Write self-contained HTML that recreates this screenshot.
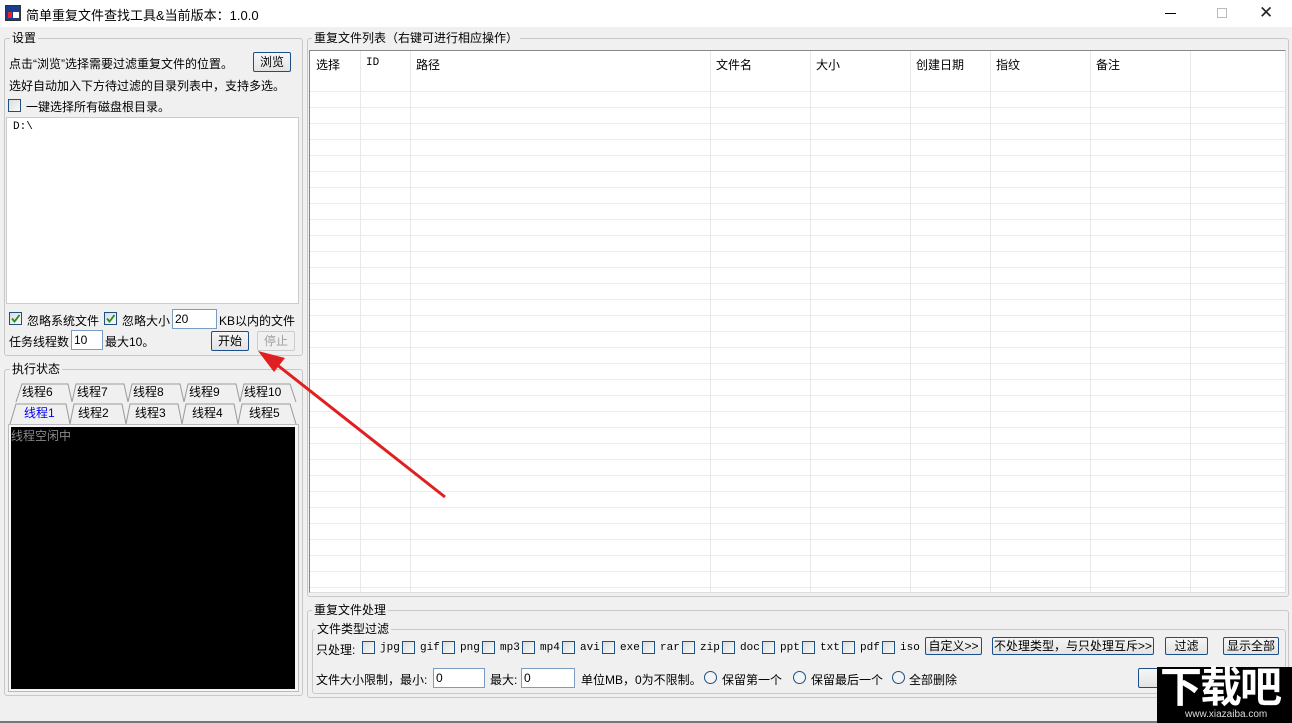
<!DOCTYPE html>
<html><head><meta charset="utf-8">
<style>
*{margin:0;padding:0;box-sizing:border-box}
body{width:1292px;height:723px;background:#f0f0f0;font-family:"Liberation Sans","Noto Sans CJK SC","WenQuanYi Zen Hei",sans-serif;font-size:12px;color:#000;position:relative;overflow:hidden}
.a{position:absolute;white-space:nowrap}
.gb{position:absolute;border:1px solid #c8c8c8;border-radius:3px}
.lg{position:absolute;background:#f0f0f0;padding:0 2px;font-size:12px;line-height:14px}
.btn{position:absolute;border:1px solid #1c4f8a;border-radius:2px;background:linear-gradient(#f6f6f6,#e3e3e3);text-align:center;line-height:16px;font-size:12px}
.cb{position:absolute;width:13px;height:13px;border:1px solid #1c5180;background:linear-gradient(135deg,#dcdcdc,#fafafa)}
.tb{position:absolute;background:#fff;border:1px solid #7a9cc0;height:20px;font-size:12px;line-height:18px;padding-left:2px}
.rd{position:absolute;width:13px;height:13px;border:1px solid #1c5180;border-radius:50%;background:#f4f4f4}
.mono{font-family:"Liberation Mono","Noto Sans CJK SC",monospace;font-size:11px}
.tab{position:absolute;height:20px;font-size:12px;line-height:20px;text-align:center}
</style></head><body>
<!-- title bar -->
<div class="a" style="left:0;top:0;width:1292px;height:27px;background:#fff"></div>
<div class="a" style="left:5px;top:5px;width:16px;height:16px;background:#1a3c8c;border:1px solid #333"><div style="position:absolute;left:2px;top:6px;width:4px;height:6px;background:#e22"></div><div style="position:absolute;left:7px;top:6px;width:6px;height:6px;background:#fff"></div></div>
<div class="a" style="left:26px;top:5px;font-size:13px">简单重复文件查找工具&amp;当前版本：1.0.0</div>
<div class="a" style="left:1165px;top:13px;width:11px;height:1px;background:#000"></div>
<div class="a" style="left:1217px;top:8px;width:10px;height:10px;border:1px solid #bbb"></div>
<div class="a" style="left:1259px;top:3px;font-size:17px;color:#222">✕</div>

<!-- settings group -->
<div class="gb" style="left:4px;top:38px;width:299px;height:318px"></div>
<div class="lg" style="left:10px;top:31px">设置</div>
<div class="a" style="left:9px;top:55px">点击“浏览”选择需要过滤重复文件的位置。</div>
<div class="btn" style="left:253px;top:52px;width:38px;height:20px;line-height:18px">浏览</div>
<div class="a" style="left:9px;top:77px">选好自动加入下方待过滤的目录列表中，支持多选。</div>
<div class="cb" style="left:8px;top:99px"></div>
<div class="a" style="left:26px;top:98px">一键选择所有磁盘根目录。</div>
<div class="a" style="left:6px;top:117px;width:293px;height:187px;background:#fff;border:1px solid #ccc"></div>
<div class="a mono" style="left:13px;top:121px">D:\</div>
<div class="cb" style="left:9px;top:312px"><svg width="11" height="11" style="position:absolute;left:0;top:0"><path d="M2 5.5 L4.5 8.5 L9.5 2" stroke="#2a8a2a" stroke-width="1.8" fill="none"/></svg></div>
<div class="a" style="left:27px;top:312px">忽略系统文件</div>
<div class="cb" style="left:104px;top:312px"><svg width="11" height="11" style="position:absolute;left:0;top:0"><path d="M2 5.5 L4.5 8.5 L9.5 2" stroke="#2a8a2a" stroke-width="1.8" fill="none"/></svg></div>
<div class="a" style="left:122px;top:312px">忽略大小</div>
<div class="tb" style="left:172px;top:309px;width:45px">20</div>
<div class="a" style="left:219px;top:312px">KB以内的文件</div>
<div class="a" style="left:9px;top:333px">任务线程数</div>
<div class="tb" style="left:71px;top:330px;width:32px">10</div>
<div class="a" style="left:105px;top:333px">最大10。</div>
<div class="btn" style="left:211px;top:331px;width:38px;height:20px;line-height:18px">开始</div>
<div class="a" style="left:257px;top:331px;width:38px;height:20px;border:1px solid #ccc;border-radius:2px;color:#a0a0a0;text-align:center;line-height:18px">停止</div>

<!-- exec group -->
<div class="gb" style="left:4px;top:369px;width:299px;height:327px"></div>
<div class="lg" style="left:10px;top:362px">执行状态</div>
<svg class="a" style="left:6px;top:380px" width="296" height="48">
<g fill="#f0f0f0" stroke="#9a9a9a" stroke-width="1">
<path d="M10 22 L16 4 L62 4 L66 22"/><path d="M66 22 L70 4 L118 4 L122 22"/><path d="M122 22 L126 4 L174 4 L178 22"/><path d="M178 22 L182 4 L230 4 L234 22"/><path d="M234 22 L238 4 L284 4 L290 22"/>
<path d="M4 44 L10 24 L60 24 L64 44"/><path d="M64 44 L68 24 L116 24 L120 44"/><path d="M120 44 L124 24 L172 24 L176 44"/><path d="M176 44 L180 24 L228 24 L232 44"/><path d="M232 44 L236 24 L284 24 L290 44"/>
</g></svg>
<div class="tab" style="left:22px;top:382px">线程6</div>
<div class="tab" style="left:77px;top:382px">线程7</div>
<div class="tab" style="left:133px;top:382px">线程8</div>
<div class="tab" style="left:189px;top:382px">线程9</div>
<div class="tab" style="left:244px;top:382px">线程10</div>
<div class="tab" style="left:24px;top:403px;color:#0000ee">线程1</div>
<div class="tab" style="left:78px;top:403px">线程2</div>
<div class="tab" style="left:135px;top:403px">线程3</div>
<div class="tab" style="left:192px;top:403px">线程4</div>
<div class="tab" style="left:249px;top:403px">线程5</div>
<div class="a" style="left:8px;top:424px;width:291px;height:268px;border:1px solid #bbb;background:#f6f6f6"></div>
<div class="a" style="left:11px;top:427px;width:284px;height:262px;background:#000"></div>
<div class="a" style="left:11px;top:427px;color:#8a8a8a">线程空闲中</div>

<!-- list group -->
<div class="gb" style="left:307px;top:38px;width:982px;height:559px"></div>
<div class="lg" style="left:312px;top:31px">重复文件列表（右键可进行相应操作）</div>
<div class="a" style="left:309px;top:50px;width:977px;height:543px;border:1px solid #888;border-right-color:#ddd;border-bottom-color:#ddd;background:#fff repeating-linear-gradient(#fff 0,#fff 15px,#ececec 15px,#ececec 16px);background-position:0 25px;background-repeat:repeat"></div>
<div class="a" style="left:310px;top:51px;width:975px;height:25px;background:#fff"></div>
<svg class="a" style="left:310px;top:51px" width="976" height="541"><g stroke="#e8e8e8"><path d="M50.5 0V541M100.5 0V541M400.5 0V541M500.5 0V541M600.5 0V541M680.5 0V541M780.5 0V541M880.5 0V541"/></g></svg>
<div class="a" style="left:316px;top:56px">选择</div>
<div class="a mono" style="left:366px;top:57px">ID</div>
<div class="a" style="left:416px;top:56px">路径</div>
<div class="a" style="left:716px;top:56px">文件名</div>
<div class="a" style="left:816px;top:56px">大小</div>
<div class="a" style="left:916px;top:56px">创建日期</div>
<div class="a" style="left:996px;top:56px">指纹</div>
<div class="a" style="left:1096px;top:56px">备注</div>

<!-- bottom group -->
<div class="gb" style="left:307px;top:610px;width:982px;height:88px"></div>
<div class="lg" style="left:312px;top:603px">重复文件处理</div>
<div class="gb" style="left:312px;top:629px;width:974px;height:65px"></div>
<div class="lg" style="left:315px;top:622px">文件类型过滤</div>
<div class="a" style="left:316px;top:641px">只处理:</div>
<div class="cb" style="left:362px;top:641px"></div><div class="a mono" style="left:380px;top:642px">jpg</div>
<div class="cb" style="left:402px;top:641px"></div><div class="a mono" style="left:420px;top:642px">gif</div>
<div class="cb" style="left:442px;top:641px"></div><div class="a mono" style="left:460px;top:642px">png</div>
<div class="cb" style="left:482px;top:641px"></div><div class="a mono" style="left:500px;top:642px">mp3</div>
<div class="cb" style="left:522px;top:641px"></div><div class="a mono" style="left:540px;top:642px">mp4</div>
<div class="cb" style="left:562px;top:641px"></div><div class="a mono" style="left:580px;top:642px">avi</div>
<div class="cb" style="left:602px;top:641px"></div><div class="a mono" style="left:620px;top:642px">exe</div>
<div class="cb" style="left:642px;top:641px"></div><div class="a mono" style="left:660px;top:642px">rar</div>
<div class="cb" style="left:682px;top:641px"></div><div class="a mono" style="left:700px;top:642px">zip</div>
<div class="cb" style="left:722px;top:641px"></div><div class="a mono" style="left:740px;top:642px">doc</div>
<div class="cb" style="left:762px;top:641px"></div><div class="a mono" style="left:780px;top:642px">ppt</div>
<div class="cb" style="left:802px;top:641px"></div><div class="a mono" style="left:820px;top:642px">txt</div>
<div class="cb" style="left:842px;top:641px"></div><div class="a mono" style="left:860px;top:642px">pdf</div>
<div class="cb" style="left:882px;top:641px"></div><div class="a mono" style="left:900px;top:642px">iso</div>
<div class="btn" style="left:925px;top:637px;width:57px;height:18px">自定义&gt;&gt;</div>
<div class="btn" style="left:992px;top:637px;width:162px;height:18px">不处理类型，与只处理互斥&gt;&gt;</div>
<div class="btn" style="left:1165px;top:637px;width:43px;height:18px">过滤</div>
<div class="btn" style="left:1223px;top:637px;width:56px;height:18px">显示全部</div>
<div class="a" style="left:316px;top:671px">文件大小限制，最小:</div>
<div class="tb" style="left:433px;top:668px;width:52px">0</div>
<div class="a" style="left:490px;top:671px">最大:</div>
<div class="tb" style="left:521px;top:668px;width:54px">0</div>
<div class="a" style="left:581px;top:671px">单位MB，0为不限制。</div>
<div class="rd" style="left:704px;top:671px"></div><div class="a" style="left:722px;top:671px">保留第一个</div>
<div class="rd" style="left:793px;top:671px"></div><div class="a" style="left:811px;top:671px">保留最后一个</div>
<div class="rd" style="left:892px;top:671px"></div><div class="a" style="left:909px;top:671px">全部删除</div>
<div class="btn" style="left:1138px;top:668px;width:40px;height:20px"></div>

<!-- status bar -->
<div class="a" style="left:0;top:721px;width:1292px;height:2px;background:#777"></div>

<!-- watermark -->
<div class="a" style="left:1157px;top:667px;width:135px;height:56px;background:#000"></div>
<div class="a" style="left:1160px;top:659px;color:#fff;font-size:42px;font-weight:bold;letter-spacing:-2px;font-family:'Noto Sans CJK SC','WenQuanYi Zen Hei',sans-serif;line-height:52px">下载吧</div>
<div class="a" style="left:1185px;top:709px;color:#ddd;font-size:10px">www.xiazaiba.com</div>

<!-- red arrow -->
<svg class="a" style="left:0;top:0" width="1292" height="723"><line x1="445" y1="497" x2="276" y2="364" stroke="#e02020" stroke-width="3"/><path d="M258 351 L285 358 L274 372 Z" fill="#e02020"/></svg>
</body></html>
